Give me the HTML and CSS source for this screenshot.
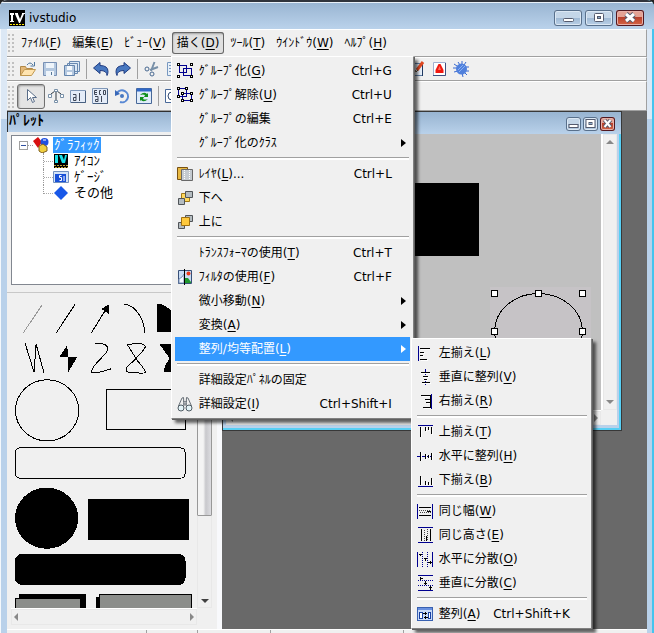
FILE: index.html
```html
<!DOCTYPE html>
<html lang="ja">
<head>
<meta charset="utf-8">
<title>ivstudio</title>
<link rel="stylesheet" href="styles.css">
</head>
<body>
<div class="app">
  <header class="titlebar">
    <svg class="icon" viewBox="0 0 16 16" aria-hidden="true"><rect width="16" height="16" fill="#000"/><path d="M1 3h4v2H4v6h1v1H1v-1h1V5H1zM6 3h3v1l2 5 2-5V3h3v1h-1l-4 9h-1L6 4z" fill="#fff"/><path d="M1 14.5h14" stroke="#ffe800" stroke-dasharray="2 1"/></svg>
    <h1 class="title">ivstudio</h1>
    <div class="controls">
      <button class="control" aria-label="最小化"><svg viewBox="0 0 28 16"><rect x="9.500" y="8.500" width="10" height="3" rx="1" fill="#fff" stroke="#555b6e"/></svg></button>
      <button class="control" aria-label="最大化"><svg viewBox="0 0 28 16"><rect x="9.500" y="3.500" width="9" height="8" rx="1" fill="#fff" stroke="#555b6e"/><rect x="12.500" y="6.500" width="3" height="2" fill="#8ba9c8" stroke="#555b6e"/></svg></button>
      <button class="control close" aria-label="閉じる"><svg viewBox="0 0 28 16"><path d="M10 4l8 7M18 4l-8 7" stroke="#555b6e" stroke-width="5"/><path d="M10 4l8 7M18 4l-8 7" stroke="#fff" stroke-width="3"/></svg></button>
    </div>
  </header>

  <nav class="bar menubar">
    <span class="grip"></span>
    <button class="menu-button">ﾌｧｲﾙ(<u>F</u>)</button>
    <button class="menu-button">編集(<u>E</u>)</button>
    <button class="menu-button">ﾋﾞｭｰ(<u>V</u>)</button>
    <div class="menu-host">
      <button class="menu-button open" aria-expanded="true">描く(<u>D</u>)</button>
      <ul class="menu main-menu" role="menu">
        <li><button class="item"><svg class="icon crisp" viewBox="0 0 16 16"><path d="M2.500 2.500h7v7h-7zM6.500 5.500h8v7h-8z" fill="#eee" stroke="#000090"/><g fill="#fff" stroke="#000"><path d="M.5.5h2v2h-2zM13.500.5h2v2h-2zM.5 12.500h2v2h-2zM13.500 12.500h2v2h-2z"/></g></svg><span>ｸﾞﾙｰﾌﾟ化(<u>G</u>)</span><kbd>Ctrl+G</kbd></button></li>
        <li><button class="item"><svg class="icon crisp" viewBox="0 0 16 16"><path d="M1.500 1.500h8v8h-8zM5.500 6.500h9v7h-9z" fill="#eee" stroke="#000090"/><g fill="#fff" stroke="#000"><path d="M.5.5h2v2h-2zM8.500.5h2v2h-2zM.5 8.500h2v2h-2zM4.500 5.500h2v2h-2zM13.500 5.500h2v2h-2zM4.500 12.500h2v2h-2zM13.500 12.500h2v2h-2z"/></g></svg><span>ｸﾞﾙｰﾌﾟ解除(<u>U</u>)</span><kbd>Ctrl+U</kbd></button></li>
        <li><button class="item"><span class="label">ｸﾞﾙｰﾌﾟの編集</span><kbd>Ctrl+E</kbd></button></li>
        <li><button class="item more"><span class="label">ｸﾞﾙｰﾌﾟ化のｸﾗｽ</span></button></li>
        <li class="separator" role="separator"></li>
        <li><button class="item"><svg class="icon" viewBox="0 0 16 16"><path d="M.5 1.500h10v12H.5z" fill="#e8b840" stroke="#785010"/><path d="M4.500 3.500h11v11h-11z" fill="#c4cad0" stroke="#686868"/><path d="M7.500 4v10M12.500 4v10" stroke="#fff" stroke-dasharray="1 1"/></svg><span>ﾚｲﾔ(<u>L</u>)...</span><kbd>Ctrl+L</kbd></button></li>
        <li><button class="item"><svg class="icon" viewBox="0 0 16 16"><path d="M4.500 3.500h8v8h-8z" fill="#ffd85c" stroke="#a07818"/><path d="M8.500 1.500h7v6h-7zM1.500 8.500h6v6h-6z" fill="#b4bcc0" stroke="#505458"/></svg><span>下へ</span></button></li>
        <li><button class="item"><svg class="icon" viewBox="0 0 16 16"><path d="M8.500 1.500h7v6h-7zM1.500 8.500h6v6h-6z" fill="#b4bcc0" stroke="#505458"/><path d="M4.500 3.500h8v8h-8z" fill="#ffc93c" stroke="#a07010"/></svg><span>上に</span></button></li>
        <li class="separator" role="separator"></li>
        <li><button class="item"><span class="label">ﾄﾗﾝｽﾌｫｰﾏの使用(<u>T</u>)</span><kbd>Ctrl+T</kbd></button></li>
        <li><button class="item"><svg class="icon" viewBox="0 0 16 16"><path d="M1.500 1.500h13v13h-13z" fill="#c8dcf4" stroke="#385078"/><path d="M2 14v-4l3-2 2-3v9z" fill="#f4f8ff" stroke="#7890b8"/><path d="M8 14V9l3 0 3 4v1z" fill="#209830"/><circle cx="11.500" cy="4.500" r="2" fill="#f03818"/><path d="M7.500 0v16" stroke="#000"/></svg><span>ﾌｨﾙﾀの使用(<u>F</u>)</span><kbd>Ctrl+F</kbd></button></li>
        <li><button class="item more"><span class="label">微小移動(<u>N</u>)</span></button></li>
        <li><button class="item more"><span class="label">変換(<u>A</u>)</span></button></li>
        <li class="submenu-host">
          <button class="item more selected" aria-expanded="true"><span class="label">整列/均等配置(<u>L</u>)</span></button>
          <ul class="menu submenu" role="menu">
            <li><button class="item"><svg class="icon crisp" viewBox="0 0 16 16"><path d="M1.500 1v15" stroke="#000090"/><path d="M4 4.500h9M4 8.500h4M4 11.500h3M4 15.500h7" stroke="#fff"/><path d="M3 3.500h10M3 7.500h4M3 10.500h3M3 14.500h7" stroke="#000"/></svg><span>左揃え(<u>L</u>)</span></button></li>
            <li><button class="item"><svg class="icon crisp" viewBox="0 0 16 16"><path d="M8.500 0v16" stroke="#000090" stroke-dasharray="6 1 2 1"/><path d="M4 4.500h10M6 8.500h6M7 11.500h4M5 14.500h9" stroke="#fff"/><path d="M4 3.500h9M6 7.500h5M7 10.500h3M5 13.500h8" stroke="#000"/></svg><span>垂直に整列(<u>V</u>)</span></button></li>
            <li><button class="item"><svg class="icon crisp" viewBox="0 0 16 16"><path d="M14.500 1v15" stroke="#000090"/><path d="M5 3.500h9M9 7.500h5M10 10.500h4M7 15.500h7" stroke="#fff"/><path d="M4 2.500h9M8 6.500h5M9 9.500h4M6 14.500h7" stroke="#000"/><path d="M13.500 2v13" stroke="#000"/></svg><span>右揃え(<u>R</u>)</span></button></li>
            <li class="separator" role="separator"></li>
            <li><button class="item"><svg class="icon crisp" viewBox="0 0 16 16"><path d="M1 1.500h15" stroke="#000090"/><path d="M4.500 4v9M9.500 4v4M12.500 4v3M15.500 4v7" stroke="#fff"/><path d="M3.500 3v10M8.500 3v4M11.500 3v3M14.500 3v7" stroke="#000"/></svg><span>上揃え(<u>T</u>)</span></button></li>
            <li><button class="item"><svg class="icon crisp" viewBox="0 0 16 16"><path d="M0 8.500h16" stroke="#000090"/><path d="M4.500 4v9M9.500 6v6M12.500 7v4M15.500 5v7" stroke="#fff"/><path d="M3.500 4v9M8.500 6v5M11.500 7v3M14.500 5v7" stroke="#000"/></svg><span>水平に整列(<u>H</u>)</span></button></li>
            <li><button class="item"><svg class="icon crisp" viewBox="0 0 16 16"><path d="M1 14.500h15" stroke="#000090"/><path d="M4.500 5v8M9.500 10v3M12.500 11v2M15.500 7v6" stroke="#fff"/><path d="M3.500 4v9M8.500 9v4M11.500 10v3M14.500 6v7" stroke="#000"/></svg><span>下揃え(<u>B</u>)</span></button></li>
            <li class="separator" role="separator"></li>
            <li><button class="item"><svg class="icon crisp" viewBox="0 0 16 16"><path d="M.5 1v15M15.500 1v15" stroke="#000090"/><path d="M2 4.500h12M2 12.500h12M10 8.500h4" stroke="#000"/><path d="M2 7.500h12M3 9.500h11" stroke="#444" stroke-dasharray="1 1"/></svg><span>同じ幅(<u>W</u>)</span></button></li>
            <li><button class="item"><svg class="icon crisp" viewBox="0 0 16 16"><path d="M1 .5h15M1 15.500h15" stroke="#000090"/><path d="M4.500 2v12M13.500 2v12M9.500 9v5" stroke="#000"/><path d="M7.500 3v11M10.500 2v12" stroke="#444" stroke-dasharray="1 1"/></svg><span>同じ高さ(<u>E</u>)</span></button></li>
            <li><button class="item"><svg class="icon crisp" viewBox="0 0 16 16"><path d="M.5 1v15M15.500 1v15" stroke="#000090"/><path d="M5.500 1v15M10.500 1v15" stroke="#000090" stroke-dasharray="1 1"/><path d="M2 3.500h3M3.500 3v2M7 7.500h3M8.500 7v3M11 11.500h4M13.500 10v3" stroke="#000"/></svg><span>水平に分散(<u>O</u>)</span></button></li>
            <li><button class="item"><svg class="icon crisp" viewBox="0 0 16 16"><path d="M1 .5h15M1 15.500h15" stroke="#000090"/><path d="M1 5.500h15M1 10.500h15" stroke="#000090" stroke-dasharray="1 1"/><path d="M3.500 2v3M3 3.500h3M8.500 6v4M7 8.500h3M13.500 11v4M12 12.500h3" stroke="#000"/></svg><span>垂直に分散(<u>C</u>)</span></button></li>
            <li class="separator" role="separator"></li>
            <li><button class="item"><svg class="icon crisp" viewBox="0 0 16 16"><path d="M.5 1.500h15v13H.5z" fill="#c8daf8" stroke="#3860b0"/><path d="M1 2.500h14" stroke="#6890e0" stroke-width="2"/><path d="M2.500 6.500h3v6h-3zM11.500 6.500h2v6h-2z" fill="#fff" stroke="#1840a0"/><path d="M6 7.500h4M8.500 6v3M7 11.500h4M8.500 10v3" stroke="#000"/></svg><span>整列(<u>A</u>)</span><kbd>Ctrl+Shift+K</kbd></button></li>
          </ul>
        </li>
        <li class="separator" role="separator"></li>
        <li><button class="item"><span class="label">詳細設定ﾊﾟﾈﾙの固定</span></button></li>
        <li><button class="item"><svg class="icon" viewBox="0 0 16 16"><path d="M1.500 10L5 2l1.500-.5L7 10M14.500 10L11 2l-1.500-.5L9 10M6 5l2 1 2-1M6 8h4" fill="none" stroke="#687078"/><circle cx="4" cy="12" r="3" fill="#e4f4f8" stroke="#505c64"/><circle cx="12" cy="12" r="3" fill="#e4f4f8" stroke="#505c64"/></svg><span>詳細設定(<u>I</u>)</span><kbd>Ctrl+Shift+I</kbd></button></li>
      </ul>
    </div>
    <button class="menu-button">ﾂｰﾙ(<u>T</u>)</button>
    <button class="menu-button">ｳｲﾝﾄﾞｳ(<u>W</u>)</button>
    <button class="menu-button">ﾍﾙﾌﾟ(<u>H</u>)</button>
  </nav>

  <div class="bar toolbar">
    <span class="grip"></span>
    <button class="tool" aria-label="開く"><svg class="icon" viewBox="0 0 16 16"><path d="M.5 14.500v-9h5l1 2h6v3" fill="#e4b878" stroke="#b08848"/><path d="M.5 14.500l4-6h11l-4 6z" fill="#ffe4b0" stroke="#c09850"/><path d="M7 4q3-4 6 0M14.500 1v4h-4" fill="none" stroke="#5078a0"/></svg></button>
    <button class="tool" aria-label="保存"><svg class="icon" viewBox="0 0 16 16"><path d="M1.500 1.500h13v13h-13z" fill="#b4c8e0" stroke="#7890b4"/><path d="M4 2h8v5H4zM4 10h8v5H4z" fill="#eef4fa"/><path d="M9.500 11v3" stroke="#587898"/></svg></button>
    <button class="tool" aria-label="すべて保存"><svg class="icon" viewBox="0 0 16 16"><path d="M5.500.5h10v10h-10zM3.500 2.500h10v10h-10z" fill="#dce8f4" stroke="#6888b0"/><path d="M.5 4.500h10v10H.5z" fill="#b4c8e0" stroke="#6484ac"/><path d="M3 5h5v4H3zM3 11h5v3H3z" fill="#f4f8fc"/></svg></button>
    <span class="divider"></span>
    <button class="tool" aria-label="元に戻す"><svg class="icon" viewBox="0 0 16 16"><path d="M.5 7l6.500-5.500v3q8 0 8 6 0 2-1 4 0-5-7-5v3z" fill="#4878c0" stroke="#203c80"/></svg></button>
    <button class="tool" aria-label="やり直し"><svg class="icon" viewBox="0 0 16 16"><path d="M15.500 7L9 1.500v3q-8 0-8 6 0 2 1 4 0-5 7-5v3z" fill="#4878c0" stroke="#203c80"/></svg></button>
    <span class="divider"></span>
    <button class="tool" aria-label="切り取り"><svg class="icon" viewBox="0 0 16 16"><path d="M10.500 1L7 10M14 6l-8 3" stroke="#7890a8" stroke-width="2"/><circle cx="3" cy="8" r="2" fill="none" stroke="#486890"/><circle cx="8" cy="13" r="2" fill="none" stroke="#486890"/></svg></button>
    <button class="tool" aria-label="コピー"><svg class="icon" viewBox="0 0 16 16"><path d="M1.500 1.500h9v13h-9z" fill="#e8f0f8" stroke="#7898c0"/><path d="M3 4.500h5M3 7.500h5M3 10.500h5" stroke="#7898c0"/></svg></button>
    <div class="tool-group">
      <button class="tool" aria-label="メモ"><svg class="icon" viewBox="0 0 16 16"><path d="M2.500 2.500h11v12h-11z" fill="#e8f0fa" stroke="#6080a8"/><path d="M13.500 3v12" stroke="#203860"/><path d="M8 9l6-8" stroke="#e04820" stroke-width="3"/><path d="M6 9l1 2 2-2" fill="none" stroke="#604020"/></svg></button>
      <button class="tool" aria-label="警告"><svg class="icon" viewBox="0 0 16 16"><path d="M2.500 1.500h12v13h-12z" fill="#fff" stroke="#a0b0d0"/><path d="M2 14.500h12.500V2" fill="none" stroke="#405080"/><path d="M7.500 3h2l3 6v3h-8V9z" fill="#f01810"/><path d="M8.500 5L7 9h3z" fill="#ff7060"/></svg></button>
      <button class="tool" aria-label="設定"><svg class="icon" viewBox="0 0 16 16"><path d="M9 0v3M5 1l2 3M13 1l-2 3M0 7h4M1 11l4-1M16 6h-4M16 10h-4M10 16l-1-4M14 14l-3-3M1 3l3 2" stroke="#3868d0" stroke-width="1"/><circle cx="8.500" cy="8" r="5.500" fill="#5080dc"/><path d="M5 9l5-5M6 11l6-6" stroke="#88b0f4"/></svg></button>
    </div>
  </div>

  <div class="bar toolbar tall">
    <span class="grip"></span>
    <button class="tool pressed" aria-label="選択"><svg class="icon" viewBox="0 0 16 16"><path d="M4.500 1.500v11l3-3 2 5 2-1-2-4h4z" fill="#fff" stroke="#586c88"/></svg></button>
    <button class="tool" aria-label="ポリライン"><svg class="icon" viewBox="0 0 16 16"><path d="M3 6l4-3M9 3l4 3M8 4v8" fill="none" stroke="#303840"/><path d="M.5 6.500h3v3h-3zM6.500 1.500h3v2h-3zM6.500 12.500h3v2h-3zM12.500 6.500h3v3h-3z" fill="#fff" stroke="#7890a8"/></svg></button>
    <button class="tool" aria-label="テキスト"><svg class="icon" viewBox="0 0 16 16"><path d="M.5 2.500h15v12H.5z" fill="#e4ecf8" stroke="#8098b8"/><path d="M15.500 3v11.500H1" fill="none" stroke="#486080"/><path d="M3 6.500h3v6H3.500v-3H6M9.500 5v8" fill="none" stroke="#404858"/></svg></button>
    <button class="tool" aria-label="複数行テキスト"><svg class="icon" viewBox="0 0 16 16"><path d="M.5.5h15v15H.5z" fill="#e4ecf8" stroke="#8098b8"/><path d="M15.500 1v14.500H1" fill="none" stroke="#486080"/><path d="M5 2.500H2.500v4H5M2.500 4.500H5M9 2.500H7.500v4H9M11.500 2.500h2v4h-2zM3 8.500h3v5H3.500v-2H6M9.500 8v6" fill="none" stroke="#404858"/></svg></button>
    <button class="tool" aria-label="回転"><svg class="icon" viewBox="0 0 16 16"><path d="M3 5a6 6 0 1 1 3 9" fill="none" stroke="#5888d4" stroke-width="2"/><path d="M1 8V2l5 4z" fill="#3868b8"/><circle cx="8" cy="8" r="2" fill="#4878c0"/></svg></button>
    <button class="tool" aria-label="更新"><svg class="icon" viewBox="0 0 16 16"><path d="M.5.500h15v15H.5z" fill="#e0ecfa" stroke="#486898"/><path d="M1 2h14" stroke="#3068c8" stroke-width="3"/><path d="M4 7q4-4 7-1l1-1v4H8l1-2q-2-1-5 0zM12 11q-4 4-7 1l-1 1V9h4l-1 2q2 1 5 0z" fill="#10901c"/></svg></button>
    <span class="divider"></span>
    <button class="tool" aria-label="図形"><svg class="icon" viewBox="0 0 16 16"><path d="M.5 1.500h13v13H.5z" fill="#fff" stroke="#486898"/><circle cx="7" cy="8" r="4" fill="none" stroke="#304870"/></svg></button>
  </div>

  <main class="workspace">
    <aside class="palette">
      <h2 class="palette-title">ﾊﾟﾚｯﾄ</h2>
      <ul class="tree">
        <li class="node root"><svg class="expander crisp" viewBox="0 0 9 9"><rect x=".5" y=".5" width="8" height="8" fill="#fff" stroke="#a0a0a0"/><path d="M2 4.500h5" stroke="#3050a0"/></svg><span class="stub"></span><svg class="icon" viewBox="0 0 16 16"><path d="M0 4l5-4 4 5-4 6z" fill="#d81010"/><circle cx="11.500" cy="5" r="4" fill="#2050e0"/><path d="M10 3h3" stroke="#fff"/><path d="M6 9l4-2 4 3v4l-5 2-3-2z" fill="#f0d040" stroke="#806020"/></svg><span class="name chosen">ｸﾞﾗﾌｨｯｸ</span></li>
        <li class="node child"><span class="branch"></span><svg class="icon" viewBox="0 0 16 16"><path d="M1 1h14v14H1z"/><path d="M2 2h3v8H2zM6 2h3l2 5 1-5h2l-2 8h-3z" fill="#18e0e8"/><path d="M1 12.500h14M2 14.500h13" stroke="#c0a030" stroke-dasharray="2 1"/></svg><span class="name">ｱｲｺﾝ</span></li>
        <li class="node child"><span class="branch"></span><svg class="icon" viewBox="0 0 16 16"><path d="M.5 2.500h15v11H.5z" fill="#d4e4f8" stroke="#7090c0"/><path d="M2 5h11v8H2z" fill="#1850d8"/><path d="M8.500 6.500H6.500v2h2v3h-2M11 7v5" fill="none" stroke="#fff"/></svg><span class="name">ｹﾞｰｼﾞ</span></li>
        <li class="node child last"><span class="branch"></span><svg class="icon" viewBox="0 0 16 16"><path d="M8 1l7 7-7 7-7-7z" fill="#1858e8"/></svg><span class="name">その他</span></li>
      </ul>
      <div class="shapes">
        <svg class="shape-list crisp" viewBox="11 293 186 314" preserveAspectRatio="xMinYMin slice" fill="none" stroke="#000">
          <path d="M23 333l19-28" stroke="#999" stroke-width="1"/>
          <path d="M56 333l19-29M91 333l16-26"/>
          <path d="M109 304v10l-8-5z" fill="#000" stroke="none"/>
          <path d="M124 304.500q8 0 14 9 6 8 6 19"/>
          <path d="M157 304h3q16 5 18 28h-21z" fill="#000" stroke="none"/>
          <path d="M25 343l9 29 2-28 8 29"/>
          <path d="M67 345l-8 12h9v15l9-15h-9z" fill="#000" stroke="none"/>
          <path d="M95 343.500h6c7 1 8 5 4 10s-13 12-14 18c0 3 11 0 20-3"/>
          <path d="M127 344.500q17-3 18 2-2 5-19 21v4q15 2 19 1 0-3-8-12z"/>
          <path d="M159 344h20l-8 14 8 14h-15q-2-3 5-14z" fill="#000" stroke="none"/>
          <ellipse cx="47" cy="410" rx="31.500" ry="30.500"/>
          <path d="M106.500 389.500h78v40h-78z"/>
          <rect x="15.500" y="447.500" width="169" height="30" rx="4"/>
          <g fill="#000" stroke="none">
            <ellipse cx="46.500" cy="517.500" rx="31.500" ry="30.500"/>
            <path d="M88 498h100v41H88zM19 593h67v16H19zM96 596h10v14H96z"/>
            <rect x="15" y="553" width="170" height="31" rx="7"/>
          </g>
          <path d="M15.500 597.500h65v20h-65zM99.500 593.500h91v20h-91z" fill="#8b8d8a"/>
        </svg>
        <div class="scroll-y"><span class="thumb"></span><span class="arrow down"></span></div>
        <div class="scroll-x"><span class="arrow left"></span><span class="arrow right"></span></div>
      </div>
    </aside>
    <section class="desktop">
      <article class="document">
        <header class="document-title">
          <button class="control small" aria-label="最小化"><svg viewBox="0 0 14 14"><rect x="2.500" y="7.500" width="9" height="3" fill="#fff" stroke="#555b6e"/></svg></button>
          <button class="control small" aria-label="最大化"><svg viewBox="0 0 14 14"><rect x="2.500" y="2.500" width="9" height="8" fill="#fff" stroke="#555b6e"/><rect x="5.500" y="5.500" width="3" height="2" fill="#8ba9c8" stroke="#555b6e"/></svg></button>
          <button class="control small close" aria-label="閉じる"><svg viewBox="0 0 14 14"><path d="M4 3l6 7M10 3l-6 7" stroke="#555b6e" stroke-width="4"/><path d="M4 3l6 7M10 3l-6 7" stroke="#fff" stroke-width="2"/></svg></button>
        </header>
        <div class="document-body">
          <svg class="canvas crisp" viewBox="226 134 375 276" preserveAspectRatio="xMaxYMin slice">
            <path d="M400 183h79v73h-79z"/>
            <path d="M490 287h101v90H490z" fill="#c6c3c6"/>
            <ellipse cx="538.500" cy="331.500" rx="44" ry="38" fill="none" stroke="#000"/>
            <g fill="#fff" stroke="#000"><path d="M491.500 290.500h6v6h-6zM535.500 290.500h6v6h-6zM579.500 290.500h6v6h-6zM491.500 328.500h6v6h-6zM579.500 328.500h6v6h-6z"/></g>
          </svg>
          <div class="scroll-y"><span class="arrow up"></span><span class="arrow down dim"></span></div>
          <div class="scroll-x"><span class="arrow left"></span><span class="arrow right"></span></div>
        </div>
      </article>
    </section>
  </main>
  <footer class="status"><span class="cell first"></span><span class="cell"></span><span class="cell wide"></span><span class="cell widest"></span></footer>
</div>
</body>
</html>
```
FILE: styles.css
```css
* { box-sizing: border-box; }

body {
  margin: 0;
  background: #222;
  color: #000;
  font: 12px/16px "DejaVu Sans", "Noto Sans CJK JP", sans-serif;
}

button {
  margin: 0;
  padding: 0;
  border: 0;
  background: none;
  color: inherit;
  font: inherit;
}

ul { margin: 0; padding: 0; list-style: none; }
svg { display: block; }
u { text-underline-offset: 2px; }

.icon { width: 16px; height: 16px; flex: none; }
.crisp { shape-rendering: crispEdges; }

.app {
  display: flex;
  flex-direction: column;
  height: 100vh;
  overflow: hidden;
  padding: 0 7px;
  border-radius: 7px 7px 0 0;
  background: linear-gradient(#dce8f5 0 119px, #b9d1ea 119px);
  box-shadow: inset 1px 0 #f4f8fc, inset -2px 0 #45c4ee;
}

/* Title bar */
.titlebar {
  display: flex;
  flex: none;
  align-items: center;
  gap: 4px;
  height: 29px;
  margin: 0 -7px;
  padding: 5px 10px 0 9px;
  border-top: 2px solid #30343c;
  border-bottom: 1px solid #b9d1ea;
  background: linear-gradient(#98b4d1, #b9d1ea);
  box-shadow: inset 0 1px #e8f0f8;
}
.title { flex: 1; margin: 0; font-size: 12px; font-weight: normal; }
.controls { display: flex; gap: 3px; }
.control {
  width: 28px;
  height: 16px;
  border-radius: 3px;
  background: linear-gradient(#c4d6e8 50%, #9fb9d4 50%, #bcd2e8);
  box-shadow: inset 0 0 0 1px #58708c, inset 0 0 0 2px #dce8f4;
}
.control svg { width: 100%; height: 100%; }
.control.close {
  background: linear-gradient(#e4a294 45%, #b8402c 45%, #d86848);
  box-shadow: inset 0 0 0 1px #501820, inset 0 0 0 2px #e8b0a8;
}
.control.small { width: 15px; height: 14px; }

/* Bars */
.bar {
  display: flex;
  flex: none;
  align-items: center;
  background: #f0f0f0;
  border-top: 1px solid #fff;
  border-right: 1px solid #a0a0a0;
  border-bottom: 1px solid #a0a0a0;
}
.grip {
  align-self: stretch;
  width: 8px;
  margin: 3px 2px 2px 0;
  background: radial-gradient(circle, #c0c0c0 1px, transparent 1px) 0 0 / 4px 4px;
}
.menubar { gap: 1px; height: 28px; }
.menubar .grip { margin-right: 0; }
.menu-button { height: 22px; padding: 0 5px; white-space: nowrap; }
.menu-button.open {
  border-radius: 3px;
  background: #e0e0e0;
  box-shadow: inset 0 0 0 1px #686868, inset 1px 2px 2px #a0a0a0;
}
.toolbar { height: 24px; }
.toolbar.tall { height: 30px; }
.tool { width: 22px; height: 20px; display: grid; place-items: center; }
.tool.pressed {
  width: 28px;
  height: 25px;
  border: 1px solid #707070;
  border-radius: 3px;
  background: #e4e4e4;
  box-shadow: inset 1px 1px 2px #999;
}
.divider { width: 1px; height: 20px; margin: 0 3px; background: #a0a0a0; }
.tool-group { display: flex; margin-left: 221px; }

/* Menus */
.menu-host, .submenu-host { position: relative; }
.menu {
  position: absolute;
  z-index: 2;
  padding: 2px 3px;
  border: 1px solid #fff;
  border-right-color: #808080;
  border-bottom-color: #808080;
  background: #f0f0f0;
  box-shadow: 1px 1px #606060, 4px 4px 3px rgba(0, 0, 0, .6);
}
.main-menu { top: 24px; left: -1px; width: 243px; }
.submenu { top: 1px; left: 236px; width: 181px; }
.item {
  position: relative;
  display: flex;
  align-items: center;
  gap: 6px;
  width: 100%;
  height: 24px;
  padding: 0 18px 0 2px;
  text-align: left;
  white-space: nowrap;
}
.item .label { padding-left: 22px; }
.item kbd { margin-left: auto; font: inherit; }
.item.selected { background: #3399ff; color: #fff; }
.item.more::after {
  content: "";
  margin-left: auto;
  margin-right: -14px;
  border: 4px solid transparent;
  border-left: 5px solid currentColor;
  border-right: 0;
}
.separator {
  height: 7px;
  padding: 2px 1px 0 2px;
}
.separator::before {
  content: "";
  display: block;
  height: 2px;
  border-top: 1px solid #a0a0a0;
  background: #fff;
}

/* Workspace */
.workspace { display: flex; flex: 1; min-height: 0; }
.palette {
  display: flex;
  flex: none;
  flex-direction: column;
  width: 215px;
  background: #f0f0f0;
  border-right: 5px solid #f8f9fc;
}
.palette-title {
  flex: none;
  height: 21px;
  margin: 0;
  padding: 0 1px;
  border-top: 1px solid #303030;
  border-left: 1px solid #303030;
  background: linear-gradient(#98b4d1, #b9d1ea);
  font-size: 14px;
  line-height: 17px;
}
.tree {
  flex: none;
  height: 150px;
  margin: 3px 4px 7px;
  padding: 1px 7px;
  border: 1px solid #828790;
  background: #fff;
  font-size: 13px;
}
.node { display: flex; align-items: center; height: 16px; }
.expander { width: 9px; height: 9px; }
.stub { width: 5px; border-top: 1px dotted #999; }
.name { padding: 0 1px; margin-left: 4px; }
.name.chosen { background: #3399ff; color: #fff; }
.child { padding-left: 24px; }
.branch {
  align-self: stretch;
  width: 10px;
  border-left: 1px dotted #999;
  background: linear-gradient(90deg, #aaa 1px, transparent 1px) 0 8px / 2px 1px repeat-x;
}
.last .branch { align-self: flex-start; height: 9px; }
.shapes {
  display: grid;
  flex: 1;
  grid-template-columns: 1fr 15px;
  grid-template-rows: 1fr 17px;
  min-height: 0;
  padding: 0 5px 4px 4px;
  border-top: 1px solid #c8c8c8;
}
.shape-list { width: 100%; height: 100%; min-height: 0; }

.scroll-y, .scroll-x {
  display: flex;
  align-items: center;
  justify-content: space-between;
  padding: 3px;
  background: #f0f0f0;
  box-shadow: inset 0 0 0 1px #e8e8e8;
}
.scroll-y { flex-direction: column; padding: 0 0 5px; }
.scroll-x { border-top: 1px solid #fff; }
.thumb {
  width: 100%;
  height: 72%;
  border: 1px solid #989898;
  border-radius: 1px;
  background: linear-gradient(90deg, #f4f4f4 40%, #c8c8cc 60%, #dcdce0);
}
.arrow { border: 4px solid transparent; }
.arrow.down { border-top-color: #404040; border-bottom: 0; }
.arrow.up { border-bottom-color: #888; border-top: 0; }
.arrow.left { border-right-color: #888; border-left: 0; }
.arrow.right { border-left-color: #888; border-right: 0; }
.arrow.dim { border-top-color: #888; }

.desktop { flex: 1; min-width: 0; background: #696969; }
.document {
  display: flex;
  flex-direction: column;
  width: 400px;
  height: 320px;
  border: 1px solid #383838;
  background: #b9d1ea;
  box-shadow: inset -2px -2px #58cff4;
}
.document-title {
  display: flex;
  flex: none;
  align-items: center;
  justify-content: flex-end;
  gap: 2px;
  height: 22px;
  padding: 2px 6px 0 0;
  background: linear-gradient(#98b4d1, #b9d1ea);
}
.document-body {
  display: grid;
  flex: 1;
  grid-template-columns: 1fr 16px;
  grid-template-rows: 1fr 15px;
  min-height: 0;
  margin: 0 4px 5px 3px;
  background: #f0f0f0;
}
.document .scroll-y { padding: 6px 0; border-left: 2px solid #fff; }
.canvas { width: 100%; height: 100%; background: #c0c0c0; }

.status {
  display: flex;
  flex: none;
  height: 4px;
  border-top: 1px solid #fff;
  background: #f0f0f0;
}
.cell { width: 51px; border-right: 1px solid #a0a0a0; }
.cell.first { width: 140px; }
.cell.wide { width: 73px; }
.cell.widest { width: 133px; }
```
